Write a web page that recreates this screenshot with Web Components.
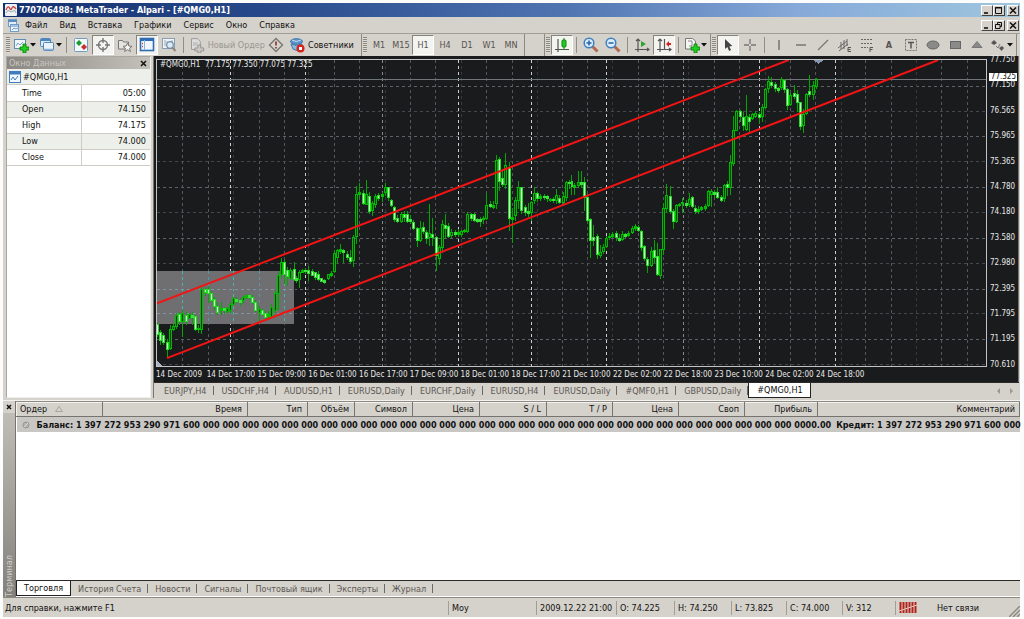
<!DOCTYPE html>
<html lang="ru">
<head>
<meta charset="utf-8">
<title>770706488: MetaTrader - Alpari - [#QMG0,H1]</title>
<style>
html,body{height:100%}
body{margin:0;background:#fcfcfc;font:9px/12px "DejaVu Sans Condensed","DejaVu Sans","Liberation Sans",sans-serif;color:#111}
</style>
</head>
<body>
<mt-app>
  <mt-title slot="title">770706488: MetaTrader - Alpari - [#QMG0,H1]</mt-title>
  <mt-menu slot="menu"></mt-menu>
  <mt-toolbar slot="tools"></mt-toolbar>
  <mt-data slot="data"></mt-data>
  <mt-chart slot="chart"></mt-chart>
  <mt-tabs slot="charttabs" kind="charts" items="EURJPY,H4|USDCHF,H4|AUDUSD,H1|EURUSD,Daily|EURCHF,Daily|EURUSD,H4|EURUSD,Daily|#QMF0,H1|GBPUSD,Daily|#QMG0,H1" active="9"></mt-tabs>
  <mt-terminal slot="terminal">
    <mt-tabs slot="tabs" kind="terminal" items="Торговля|История Счета|Новости|Сигналы|Почтовый ящик|Эксперты|Журнал" active="0"></mt-tabs>
  </mt-terminal>
  <mt-status slot="status"></mt-status>
</mt-app>
<script>
const BASE = `*,:host{box-sizing:border-box}
button{font:inherit;color:inherit;margin:0;padding:0;border:0;background:none;white-space:nowrap}
svg{display:block}`;
function define(name, css, html, setup) {
  const t = document.createElement('template');
  t.innerHTML = typeof html === 'string' ? `<style>${BASE}${css}</style>${html}` : '';
  customElements.define(name, class extends HTMLElement {
    connectedCallback() {
      if (this.shadowRoot) return;
      const root = this.attachShadow({mode: 'open'});
      if (typeof html === 'function') root.innerHTML = `<style>${BASE}${css}</style>${html(this)}`;
      else root.append(t.content.cloneNode(true));
      if (setup) setup(root, this);
    }
  });
}

/* ---------- icons ---------- */
const plus = '<path d="M9 9h3v3h3v3h-3v3h-3v-3H6v-3h3z" transform="translate(1 -2)" fill="#1fd01f" stroke="#067a06" stroke-width=".8"/>';
const axes = '<path d="M4 2v13M1 12.5h14M2 4l2-2 2 2M13 11l2 1.500-2 1.500" fill="none" stroke="#555" stroke-width="1.200"/>';
const ICONS = {
  newchart: '<rect x="1.500" y="2.500" width="11" height="9" fill="#eef5fb" stroke="#5f8db5"/><path d="M3 9l2-3 2 2 3-3" fill="none" stroke="#7ba4c8"/>' + plus,
  profiles: '<rect x="1.500" y="1.500" width="10" height="8" rx="1" fill="#dcebf7" stroke="#4f86ba"/><path d="M2 3h9" stroke="#4f86ba" stroke-width="2"/><rect x="4.500" y="5.500" width="10" height="8" rx="1" fill="#eaf3fa" stroke="#4f86ba"/><path d="M5 12.500h9" stroke="#8cb2d6" stroke-width="1.500"/>',
  market: '<rect x="1.500" y="1.500" width="13" height="13" rx="1" fill="#f2f8fc" stroke="#6e9cc4"/><path d="M3 6l3-3 3 3-3 3z" fill="#1d9a2d"/><path d="M8 10l3-3 3 3-3 3z" fill="#c8322c"/>',
  cross: '<circle cx="8" cy="8" r="4.500" fill="none" stroke="#777" stroke-width="1.400"/><path d="M8 1v5M8 10v5M1 8h5M10 8h5" stroke="#777" stroke-width="1.400"/>',
  star: '<path d="M1.500 3.500h4l1 1.500h5v7h-10z" fill="#e6e4df" stroke="#777"/><path d="M10.500 6l1.400 3 3.100.300-2.400 2 .800 3.200-2.900-1.800-2.900 1.800.800-3.200-2.400-2L9.100 9z" fill="#f5f5f1" stroke="#777"/>',
  nav: '<rect x="1.500" y="1.500" width="13" height="12" fill="#f2f7fd" stroke="#2e6cb5" stroke-width="1.600"/><path d="M2 3h12" stroke="#2e6cb5" stroke-width="2"/><path d="M5.500 3v10" stroke="#8cb4e0"/><path d="M3 6.500h1M3 9.500h1" stroke="#b54" stroke-width="1.400"/>',
  tester: '<rect x="1.500" y="1.500" width="12" height="10" fill="#f0f3f5" stroke="#8aa0b2"/><path d="M4 3v6M6 4v5M11 3v5" stroke="#9ab"/><circle cx="9" cy="8" r="3.300" fill="#dcebf5" stroke="#6d8dab" stroke-width="1.200"/><path d="M11.300 10.500l3.200 3.500" stroke="#92887c" stroke-width="2"/>',
  order: '<path d="M2.500 1.500h6l3 3v8h-9z" fill="#ddd" stroke="#999"/><path d="M4 6h5M4 8h4" stroke="#aaa"/><path d="M9 8h3v3h3v3h-3v2H9v-2H6v-3h3z" fill="#c9c7c3" stroke="#8a8a86" stroke-width=".800"/>',
  alert: '<path d="M8 1.500L14.500 8 8 14.500 1.500 8z" fill="#d6d2cc" stroke="#777" stroke-width="1.400"/><path d="M8 4.500v4M8 10v1.600" stroke="#8c2f2a" stroke-width="1.600"/>',
  expert: '<ellipse cx="7.500" cy="4.500" rx="6" ry="2.800" fill="#5d97cd" stroke="#366fa4"/><path d="M2 7q5 3 11 0l-1 5q-4 3-8 0z" fill="#8bb9e0" stroke="#4177aa"/><path d="M3 3q4 3 9 0" fill="none" stroke="#c3dcf2"/><circle cx="11.500" cy="11.500" r="4" fill="#d8231b"/><rect x="10" y="10" width="3" height="3" fill="#fff"/>',
  candle: '<path d="M4 2v13M1 12.500h14" fill="none" stroke="#555" stroke-width="1.200"/><path d="M10 1v12" stroke="#0a8a0a"/><rect x="8" y="3" width="4" height="7" rx="1" fill="#22cc22" stroke="#0a8a0a"/>',
  zin: '<path d="M9.500 9.500l5 5" stroke="#b4694e" stroke-width="3"/><circle cx="6" cy="6" r="4.800" fill="#d9ecfb" stroke="#3f7fbf" stroke-width="1.500"/><path d="M6 3.500v5M3.500 6h5" stroke="#2b62a5" stroke-width="1.500"/>',
  zout: '<path d="M9.500 9.500l5 5" stroke="#b4694e" stroke-width="3"/><circle cx="6" cy="6" r="4.800" fill="#d9ecfb" stroke="#3f7fbf" stroke-width="1.500"/><path d="M3.500 6h5" stroke="#2b62a5" stroke-width="1.500"/>',
  scroll: axes + '<path d="M7 4l5 3-5 3z" fill="#2ba52b"/>',
  shift: axes + '<path d="M8.500 2v10" stroke="#555" stroke-width="1.200"/><path d="M15 6h-2V4L10 7l3 3V8h2z" fill="#d02020"/>',
  indic: '<path d="M1.500 1.500h7l3 2.500v8h-10z" fill="#f4f6f4" stroke="#777"/><path d="M4 4h4v5H5" fill="none" stroke="#888"/>' + plus,
  cursor: '<path d="M5 2v10l2.400-2 1.700 4 1.900-.900-1.700-3.700 3-.400z" fill="#444"/>',
  hair: '<path d="M8 2v5M8 9v5M2 8h5M9 8h5" stroke="#777" stroke-width="1.300"/>',
  vline: '<path d="M8 3v10" stroke="#666" stroke-width="1.300"/>',
  hline: '<path d="M3 8h10" stroke="#666" stroke-width="1.300"/>',
  trend: '<path d="M3 13L13 3" stroke="#777" stroke-width="1.300"/>',
  equi: '<path d="M1 11l9-7M2 14l9-7M4 12V5M7 12V3M10 9V2" stroke="#666" fill="none"/><path d="M14 10.500h-3v4h3M11 12.500h2.500" stroke="#555" fill="none"/>',
  fibo: '<path d="M2 2.500h12M2 6.500h12M2 10.500h7" stroke="#666" stroke-dasharray="2 1"/><path d="M14 10.500h-3V15M11 12.500h2.500" stroke="#555" fill="none"/>',
  label: '<rect x="2.500" y="2.500" width="11" height="11" fill="none" stroke="#777" stroke-dasharray="2 1"/><path d="M5 5.500h6M8 5.500v6" stroke="#555" stroke-width="1.500"/>',
  ellipse: '<ellipse cx="8" cy="8" rx="6" ry="4" fill="#8a8a88" stroke="#666"/>',
  rect: '<rect x="3.500" y="4.500" width="10" height="7" fill="#8a8a88" stroke="#666"/>',
  tri: '<path d="M8 4.500l5 6H3z" fill="#8a8a88" stroke="#777"/>',
  arrows: '<path d="M1 6l3-3 3 3-3 2z" fill="#555"/><path d="M6 9l2 2 2-4" fill="none" stroke="#777"/><path d="M9 11l3-2 2 2-2.500 3z" fill="#555"/>'
};

/* ---------- application frame ---------- */
define('mt-app', `
:host{display:flex;flex-direction:column;height:100vh;min-height:480px;padding:3px 4px 2px 3px;overflow:hidden}
.work{flex:1;display:flex;min-height:0;background:#d5d1cb;padding:0 1px 2px 2px}
.left{flex:0 0 148px;display:flex;padding:0 2px 0 1px}
.right{flex:1;min-width:0;display:flex;flex-direction:column;border-left:1px solid #77736e}
::slotted([slot=data]){flex:1}
::slotted([slot=chart]){flex:1;min-height:0}
::slotted([slot=terminal]){flex:0 0 197px}`,
`<slot name="title"></slot><slot name="menu"></slot><slot name="tools"></slot>
<div class="work"><div class="left"><slot name="data"></slot></div><div class="right"><slot name="chart"></slot><slot name="charttabs"></slot></div></div>
<slot name="terminal"></slot><slot name="status"></slot>`);

define('mt-wbtn', `
:host{display:block}
button{display:block;width:12px;height:11px;background:#d6d2cb;border:1px solid;border-color:#fff #444 #444 #fff}
svg{margin:0 auto}`,
el => `<button aria-label="${el.getAttribute('label')}"><svg width="10" height="9" fill="none" stroke="#111">${({
  min: '<path d="M2 7h4" stroke-width="1.600"/>',
  max: '<path d="M1.500 1.500h6v6h-6zM1 2h7"/>',
  restore: '<path d="M3.500 3V1.500h4v4H6M1.500 3.500H6v4H1.500z"/>',
  close: '<path d="M2 1.500l6 6M8 1.500l-6 6" stroke-width="1.500"/>'})[el.getAttribute('kind')]}</svg></button>`);
const wbtns = mid => `<div class="btns"><mt-wbtn kind="min" label="Свернуть"></mt-wbtn><mt-wbtn kind="${mid}" label="Развернуть"></mt-wbtn><mt-wbtn class="c" kind="close" label="Закрыть"></mt-wbtn></div>`;
const BTNCSS = `.btns{display:flex;margin-left:auto;padding-right:1px}.c{margin-left:2px}`;

define('mt-title', `
:host{display:flex;align-items:center;flex:none;height:14px;padding-left:2px;color:#fff;font-weight:bold;background:linear-gradient(90deg,#16316f,#26488a 25%,#4f74b0 55%,#86a9d9 78%,#9fc6de)}
svg{margin-right:2px}${BTNCSS}`,
`<svg width="12" height="12" viewBox="0 0 12 12"><rect width="12" height="12" rx="1" fill="#eef0f4"/><path d="M1 6q2-5 3.500-2T7 4t4 1" fill="none" stroke="#c8403c" stroke-width="1.300"/><path d="M1 9q2-4 3.500-2T8 7t3 2" fill="none" stroke="#9aa" stroke-width="1"/></svg>
<span><slot></slot></span>${wbtns('max')}`);

define('mt-menu', `
:host{display:flex;align-items:center;flex:none;height:16px;padding-left:4px;background:#d5d1cb}
nav{display:flex;gap:12px;margin-left:5px}${BTNCSS}`,
`<svg width="13" height="13" viewBox="0 0 13 13"><rect x="1.500" y=".500" width="8" height="7" fill="#e4eef8" stroke="#6f9cc9"/><path d="M1 2h9" stroke="#5b8cc0" stroke-width="2"/><rect x="3.500" y="5.500" width="8" height="7" fill="#eff5fb" stroke="#6f9cc9"/><path d="M4 7h8" stroke="#5b8cc0"/><path d="M5 11l2-2 2 1 2-1" fill="none" stroke="#6f9cc9"/></svg>
<nav>${['Файл','Вид','Вставка','Графики','Сервис','Окно','Справка'].map(t => `<button>${t}</button>`).join('')}</nav>${wbtns('restore')}`);

/* ---------- toolbar ---------- */
define('mt-tool', `
:host{display:block;flex:none}
button{display:flex;align-items:center;justify-content:center;width:22px;height:20px;color:#55534f}
:host([on]) button{background:#f3f3ef;border:1px solid;border-color:#86827c #fff #fff #86827c}
:host([drop]) button{width:26px}
:host([text]) button{justify-content:flex-start;padding-left:2px;gap:3px;color:#111}
:host([off]) button{color:#9a9690}
:host([wide="1"]) button{width:78px}:host([wide="2"]) button{width:72px}
:host([bold]) button{font-weight:bold}`,
el => { const i = el.getAttribute('icon'), l = el.getAttribute('label');
  return `<button aria-label="${l}">${i ? `<svg width="16" height="16" viewBox="0 0 16 16">${ICONS[i]}</svg>` : ''}<slot></slot>${el.hasAttribute('drop') ? '<svg width="7" height="4"><path d="M1 0h6L4 3.500z" fill="#111"/></svg>' : ''}</button>`; });

define('mt-group', `
:host{display:flex;align-items:center;flex:none;height:22px;padding-right:2px;border-right:1px solid #8d8983}
i{width:4px;height:16px;margin:0 1px;background:repeating-linear-gradient(#8b8781 0 1px,#dedad4 1px 2px)}
:host([bare]){width:20px}:host([bare]) i{display:none}`, `<i></i><slot></slot>`);
define('mt-sep', `:host{display:block;flex:none;width:7px;height:16px}i{display:block;width:1px;height:16px;margin:0 auto;background:#918d87}`, `<i></i>`);

const tool = (icon, label, a = '') => `<mt-tool icon="${icon}" label="${label}" ${a}></mt-tool>`;
const sep = '<mt-sep></mt-sep>';
define('mt-toolbar', `
:host{display:flex;align-items:center;flex:none;height:23px;padding-left:2px;background:#d5d1cb;border-top:1px solid #a19d97}`,
`<mt-group>${tool('newchart','Новый график','drop')}${tool('profiles','Профили','drop')}${sep}${tool('market','Обзор рынка')}${tool('cross','Окно данных','on')}${tool('star','Навигатор')}${tool('nav','Терминал','on')}${tool('tester','Тестер')}${sep}<mt-tool icon="order" label="Новый Ордер" text off wide="1">Новый Ордер</mt-tool>${tool('alert','Редактор')}<mt-tool icon="expert" label="Советники" text wide="2">Советники</mt-tool></mt-group>
<mt-group>${['M1','M15','H1','H4','D1','W1','MN'].map(t => `<mt-tool label="${t}" ${t === 'H1' ? 'on' : ''}>${t}</mt-tool>`).join('')}</mt-group>
<mt-group bare></mt-group>
<mt-group>${tool('candle','Свечи','on')}${sep}${tool('zin','Увеличить')}${tool('zout','Уменьшить')}${sep}${tool('scroll','Автопрокрутка')}${tool('shift','Сдвиг графика','on')}${sep}${tool('indic','Индикаторы','drop')}</mt-group>
<mt-group>${tool('cursor','Курсор','on')}${tool('hair','Перекрестие')}${sep}${tool('vline','Вертикальная линия')}${tool('hline','Горизонтальная линия')}${tool('trend','Трендовая линия')}${tool('equi','Канал')}${tool('fibo','Фибоначчи')}<mt-tool label="A" bold>A</mt-tool>${tool('label','Метка')}${tool('ellipse','Эллипс')}${tool('rect','Прямоугольник')}${tool('tri','Треугольник')}${tool('arrows','Стрелки','drop')}</mt-group>`);

/* ---------- data window ---------- */
define('mt-data', `
:host{display:flex;flex-direction:column;background:#fff;border:1px solid #aaa6a0;border-color:#aaa6a0 #eee #eee #aaa6a0}
header{display:flex;align-items:center;justify-content:space-between;height:12px;background:linear-gradient(90deg,#8b8883,#c4c0ba);color:#c9c6c1;padding:0 3px 0 2px}
header button{color:#111;font-weight:bold;line-height:10px}
h2{display:flex;align-items:center;gap:2px;margin:0;height:16px;font:inherit;padding-left:2px;background:#edf0ea;border-bottom:1px solid #cfcbc5}
table{border-collapse:collapse;width:100%;table-layout:fixed}
th,td{height:16px;padding:0 5px 0 15px;border-bottom:1px solid #cfcbc5;font-weight:normal;text-align:left;line-height:12px}
td{text-align:right;padding:0 4px 0 0;border-left:1px solid #cfcbc5;width:69px}
tr:nth-child(even){background:#edf0ea}`,
`<header><span>Окно Данных</span><button aria-label="Закрыть"><svg width="7" height="7"><path d="M1 1l5 5M6 1L1 6" stroke="#111" stroke-width="1.500"/></svg></button></header>
<h2><svg width="12" height="12"><rect x=".500" y=".500" width="11" height="11" fill="#f3f8fd" stroke="#3f7dc0"/><path d="M0 2h12" stroke="#3f7dc0" stroke-width="3"/><path d="M2 9l2-3 2 3 3-4" fill="none" stroke="#3f7dc0"/></svg>#QMG0,H1</h2>
<table>${[['Time','05:00'],['Open','74.150'],['High','74.175'],['Low','74.000'],['Close','74.000']].map(r => `<tr><th scope="row">${r[0]}</th><td>${r[1]}</td></tr>`).join('')}</table>`);

/* ---------- chart ---------- */
// each candle: high, body top, body bottom, low, then u (rising) or d (falling)
const CANDLES = `324 325 335 337d 331 333 341 345d 334 336 343 345d 340 343 350 357d 326 330 349 350u 325 327 330 331u 314 316 327 329u 313 315 322 325d 311 314 322 337u 313 316 322 325d 314 315 319 319u 313 316 318 325d 316 317 330 331d 326 329 330 333u 287 290 330 334u 287 289 293 296d 286 289 294 303d 292 294 301 302d 298 300 307 310d 303 307 313 315d 303 309 311 315u 308 309 311 314d 308 309 312 313u 302 305 311 314u 298 299 305 306u 298 300 302 303d 299 301 303 306d 297 298 301 304u 295 296 298 299u 295 296 298 299d 296 298 303 304d 301 303 311 312d 307 310 313 323u 310 311 315 316d 312 314 318 320d 312 315 317 320u 305 308 317 319u 292 294 311 313u 271 275 294 310u 258 262 274 278u 260 262 274 283d 267 270 276 285d 268 270 278 279u 262 269 279 280d 276 278 280 282d 270 272 279 287u 269 270 272 272u 268 270 271 273d 266 270 273 280d 269 271 275 275d 272 272 277 279d 271 274 279 280d 278 278 281 281d 279 280 282 283d 274 274 278 279u 271 273 275 276u 250 253 271 272u 249 250 257 263u 244 249 251 253u 249 250 252 262d 251 254 257 259d 250 257 261 263d 235 237 260 266u 186 194 236 243u 183 192 194 198u 190 193 203 204d 180 194 204 204u 192 196 211 213d 201 203 210 215u 194 196 204 207u 193 195 198 200d 192 194 196 201u 183 187 192 195u 187 187 197 200d 199 200 205 206d 206 207 219 221d 215 218 221 222d 212 214 221 222u 211 214 217 221d 211 214 221 222d 215 219 221 223d 220 222 228 229d 227 228 240 246d 221 228 240 241u 222 227 231 233d 230 232 238 243d 204 233 237 245u 218 234 237 245d 236 237 255 270d 245 247 258 264u 220 224 247 252u 214 225 228 238d 223 226 236 237d 229 232 235 237u 230 232 234 236d 229 232 234 236u 230 231 234 236u 229 230 231 232u 212 214 231 232u 213 214 218 220d 213 214 220 221d 218 219 221 222d 217 219 221 226d 216 218 219 223u 193 205 218 219u 201 204 206 207d 201 205 207 208u 155 160 203 208u 157 159 181 190d 171 178 184 186d 153 165 184 188u 162 167 218 230d 208 217 219 242u 197 200 215 220u 181 187 200 208u 187 187 210 213d 205 207 212 215d 203 211 213 216d 201 202 212 220u 187 193 200 203u 192 193 198 201d 194 196 198 200u 194 196 197 199d 195 196 198 201d 198 199 200 201u 197 199 200 202d 189 195 200 203u 195 198 202 203d 192 196 202 203u 181 182 197 200u 180 182 183 188d 175 181 186 194d 183 185 187 194u 171 182 185 187u 171 182 184 186d 177 182 197 210d 194 197 220 221d 218 219 240 257d 225 237 240 245d 234 236 254 258d 245 252 255 257u 244 247 251 253u 236 238 246 247u 233 236 237 239u 232 234 236 237u 231 233 237 240d 234 238 240 241d 231 234 239 240u 233 234 236 237d 231 233 235 236u 226 228 232 233u 224 226 228 230u 225 227 230 231d 230 231 247 250d 245 246 258 260d 257 259 265 272d 247 251 265 266u 240 250 257 262d 243 256 274 275d 249 249 275 278u 203 208 249 254u 184 195 208 212u 186 196 211 213d 209 211 221 228d 204 205 221 222u 203 204 205 206u 198 202 203 212u 200 203 205 207d 193 199 204 206u 196 197 206 207d 205 208 211 213d 206 209 211 213u 206 207 209 210u 204 206 208 210u 190 191 205 206u 189 191 194 206u 190 192 194 197d 187 192 197 198d 195 197 200 201d 184 185 198 201u 181 184 187 195d 155 162 187 194u 115 129 163 165u 109 110 129 129u 109 110 115 120d 111 116 124 129d 94 115 128 129u 113 116 120 131d 112 113 117 118u 110 112 115 116u 111 113 116 122d 103 106 115 120u 87 88 106 107u 75 80 87 91u 76 81 84 86d 81 83 87 90d 86 87 89 91d 76 78 86 88u 78 79 88 91d 87 88 104 108d 92 94 103 104u 84 92 95 97d 89 93 101 110d 101 101 125 128d 108 113 124 131u 92 93 112 113u 74 90 93 95d 80 84 93 98u 77 78 85 87u`;
function plot() {
  let s = '';
  const dash = 'stroke-dasharray="3 3"';
  for (let i = 0; i < 12; i++) { const y = Math.round(85 + i * 25.45) + .5; s += `<path d="M156 ${y}H988" stroke="${i % 2 ? '#45484b' : '#5d6266'}" ${dash}/>`; }
  for (let i = 1; i < 33; i++) { const x = Math.round(156 + i * 25.4) + .5; s += `<path d="M${x} 59V367" stroke="${i % 3 ? '#55585b' : '#37393b'}" ${dash}/>`; }
  for (const x of [229, 305, 382, 458, 531, 607, 684, 760, 836]) s += `<path d="M${x}.5 59V367" stroke="${x === 382 || x === 684 ? '#8a8a8a' : '#d0d0d0'}" ${dash}/>`;
  s += `<path d="M156 78.500H988" stroke="#70757a"/>`;
  s += `<rect x="156" y="271" width="137" height="54" fill="#6f6f71"/>`;
  s += `<path d="M156 289.500H293M156 314.500H293" stroke="#8794a4" ${dash}/><path d="M181.500 271v54M232.500 271v54M283.500 271v54" stroke="#46b8ae" ${dash}/><path d="M207.500 271v54M258.500 271v54" stroke="#4f9aab" ${dash}/>`;
  CANDLES.trim().match(/\d+ \d+ \d+ \d+[ud]/g).forEach((c, i) => {
    const [h, t, b, l] = c.match(/\d+/g).map(Number), x = Math.round(156 + i * 3.177), up = c.endsWith('u');
    s += `<path d="M${x}.5 ${h}V${l + 1}" stroke="#00a800"/>`;
    if (b - t > 2) s += `<rect x="${x - .5}" y="${t + .5}" width="2" height="${b - t}" fill="${up ? '#064006' : '#c8ffc8'}" stroke="${up ? '#00bb00' : '#22dd22'}"/>`;
    else s += `<rect x="${x - 1}" y="${t}" width="3" height="${b - t + 1}" fill="${up ? '#00c000' : '#3de03d'}"/>`;
  });
  s += `<g shape-rendering="auto" stroke="#f21414" stroke-width="2"><path d="M156 304L790 59M166 359L940 59"/></g><path d="M815 59h10l-5 4z" fill="#8296ae"/><path d="M156 361v6h6z" fill="#a8b4c4"/>`;
  return s;
}
define('mt-chart', `
:host{display:grid;grid-template:3px minmax(0,1fr) 15px / minmax(0,1fr) 31px;position:relative;padding-left:2px;background:#1a1b1c;border:solid #77736e;border-width:0 1px 0 0;color:#e8e8e8;font-size:8px;line-height:8px}
.plot{grid-area:2/1;width:100%;height:100%;border:solid #c4c4c4;border-width:1px 1px 1px 1px}
.price{grid-area:1/2/4/3;display:flex;flex-direction:column;justify-content:space-between;padding:0 0 13px 3px}
.time{grid-area:3/1/4/3;display:flex;padding-top:4px;white-space:nowrap}
.time span{flex:51 1 0;min-width:0}.time::after{content:"";flex:152 1 0}
.info{position:absolute;left:6px;top:5px;white-space:pre}
.tag{position:absolute;right:1px;top:17px;background:#fff;color:#111;padding:0 1px 0 2px}`,
`<svg class="plot" viewBox="156 59 832 308" preserveAspectRatio="none" shape-rendering="crispEdges" fill="none" role="img" aria-label="График #QMG0,H1">${plot()}</svg>
<div class="price">${['77.750','77.150','76.565','75.965','75.365','74.780','74.180','73.580','72.980','72.395','71.795','71.195','70.610'].map(t => `<span>${t}</span>`).join('')}</div>
<div class="time">${['14 Dec 2009','14 Dec 17:00','15 Dec 09:00','16 Dec 01:00','16 Dec 17:00','17 Dec 09:00','18 Dec 01:00','18 Dec 17:00','21 Dec 10:00','22 Dec 02:00','22 Dec 18:00','23 Dec 10:00','24 Dec 02:00','24 Dec 18:00'].map(t => `<span>${t}</span>`).join('')}</div>
<div class="info">#QMG0,H1  77.175 77.350 77.075 77.325</div><div class="tag">77.325</div>`);

/* ---------- tab strips ---------- */
define('mt-tabs', `
:host{display:flex;align-items:center;flex:none;height:16px;background:#d5d1cb;color:#5b5854;border-top:1px solid #2c2a28}
:host([kind=charts]){padding-left:2px}
button{height:15px;padding:0 7px;position:relative}
button::after{content:"";position:absolute;right:0;top:3px;height:9px;border-right:1px solid #6d6a65}
:host([kind=charts]) button{padding:0 7px 0 8px}
.on{background:#fff;color:#111;border:solid #222;border-width:0 1px 1px}
.on::after{display:none}
.sc{margin-left:auto;margin-right:5px}`,
el => el.getAttribute('items').split('|').map((t, i) => `<button class="${i == el.getAttribute('active') ? 'on' : ''}">${t}</button>`).join('') +
  (el.getAttribute('kind') === 'charts' ? '<svg class="sc" width="18" height="8"><path d="M4 1L1 4l3 3zM14 1l3 3-3 3z" fill="#9a9690"/></svg>' : ''));

/* ---------- terminal ---------- */
const COLS = [['Ордер',86],['Время',145],['Тип',60],['Объём',47],['Символ',58],['Цена',67],['S / L',67],['T / P',66],['Цена',66],['Своп',66],['Прибыль',73],['Комментарий',0]];
define('mt-terminal', `
:host{display:flex;min-width:0;background:#d5d1cb;border-top:1px solid #f4f2ee}
aside{flex:0 0 13px;display:flex;flex-direction:column;align-items:center;justify-content:space-between;padding-top:2px;background:linear-gradient(#d5d1cb 12px,#c0bcb6 12px,#84817c);border-right:1px solid #77736e}
aside span{writing-mode:vertical-rl;transform:rotate(180deg);color:#d0cdc8;line-height:12px}
main{flex:1;min-width:0;display:flex;flex-direction:column;background:#fff;border-top:1px solid #8d8983}
table{width:100%;table-layout:fixed;border-collapse:collapse}
th{height:14px;padding:0 5px 0 3px;text-align:right;font-weight:normal;background:#d5d1cb;border:1px solid;border-color:#f4f2ee #77736e #77736e #f4f2ee;overflow:hidden;line-height:11px;white-space:nowrap}
th:first-child{text-align:left}th:last-child{padding-right:4px}
th svg{display:inline-block;margin-left:8px}
td{padding:0;height:15px;background:#c9c7c4;font-weight:bold}
.row{display:flex;align-items:center;white-space:pre;padding-left:5px;height:15px}
.row svg{flex:none;margin-right:7px}
.row span{flex:none}.dec{padding-right:5px}
.sp{flex:1}
::slotted(mt-tabs){margin-bottom:1px}`,
`<aside><button aria-label="Закрыть"><svg width="8" height="8"><path d="M2 2l4 4M6 2L2 6" stroke="#111" stroke-width="1.500"/></svg></button><span>Терминал</span></aside>
<main><table><colgroup>${COLS.map(c => `<col${c[1] ? ` style="width:${c[1]}px"` : ''}>`).join('')}</colgroup>
<thead><tr>${COLS.map((c, i) => `<th scope="col">${c[0]}${i ? '' : '<svg width="8" height="6"><path d="M.500 5.500L4 .500l3.500 5z" fill="none" stroke="#a8a49e"/></svg>'}</th>`).join('')}</tr></thead>
<tbody><tr><td colspan="12"><div class="row"><svg width="8" height="8"><circle cx="4" cy="4" r="3" fill="#b5b2ae" stroke="#9a9793"/><path d="M2 6l4-4" stroke="#ddd"/></svg><span class="bal">Баланс: 1 397 272 953 290 971 600${' 000'.repeat(30)}</span><span class="dec"> 0000.00</span><span class="cr">Кредит: 1 397 272 953 290 971 600 000</span></div></td></tr></tbody></table>
<div class="sp"></div><slot name="tabs"></slot></main>`);

/* ---------- status bar ---------- */
define('mt-status', `
:host{display:flex;align-items:center;flex:none;height:20px;background:#d5d1cb;border-top:1px solid #8d8983;white-space:nowrap}
span{height:14px;line-height:14px;padding-left:3px;border-left:1px solid #a19d97}
.help{flex:1;border:0;padding-left:2px}
.n{display:flex;align-items:center;gap:19px;width:125px}
.grip{align-self:flex-end;margin-left:-11px}`,
`<span class="help">Для справки, нажмите F1</span>
${[['Моу',88],['2009.12.22 21:00',80],['O: 74.225',58],['H: 74.250',57],['L: 73.825',55],['C: 74.000',56],['V: 312',53]].map(c => `<span style="width:${c[1]}px">${c[0]}</span>`).join('')}
<span class="n"><svg width="19" height="11"><path d="M1.500 0v11M4.500 0v11M7.500 0v11M10.500 0v11M13.500 0v11M16.500 0v11" stroke="#b3221b" stroke-width="2"/><path d="M0 9L18 3" stroke="#e8c9c0"/></svg>Нет связи</span>
<svg class="grip" width="11" height="11"><path d="M0 11L11 0M4 11l7-7M8 11l3-3" stroke="#8d8983" stroke-width="1.500"/></svg>`);
</script>
</body>
</html>
